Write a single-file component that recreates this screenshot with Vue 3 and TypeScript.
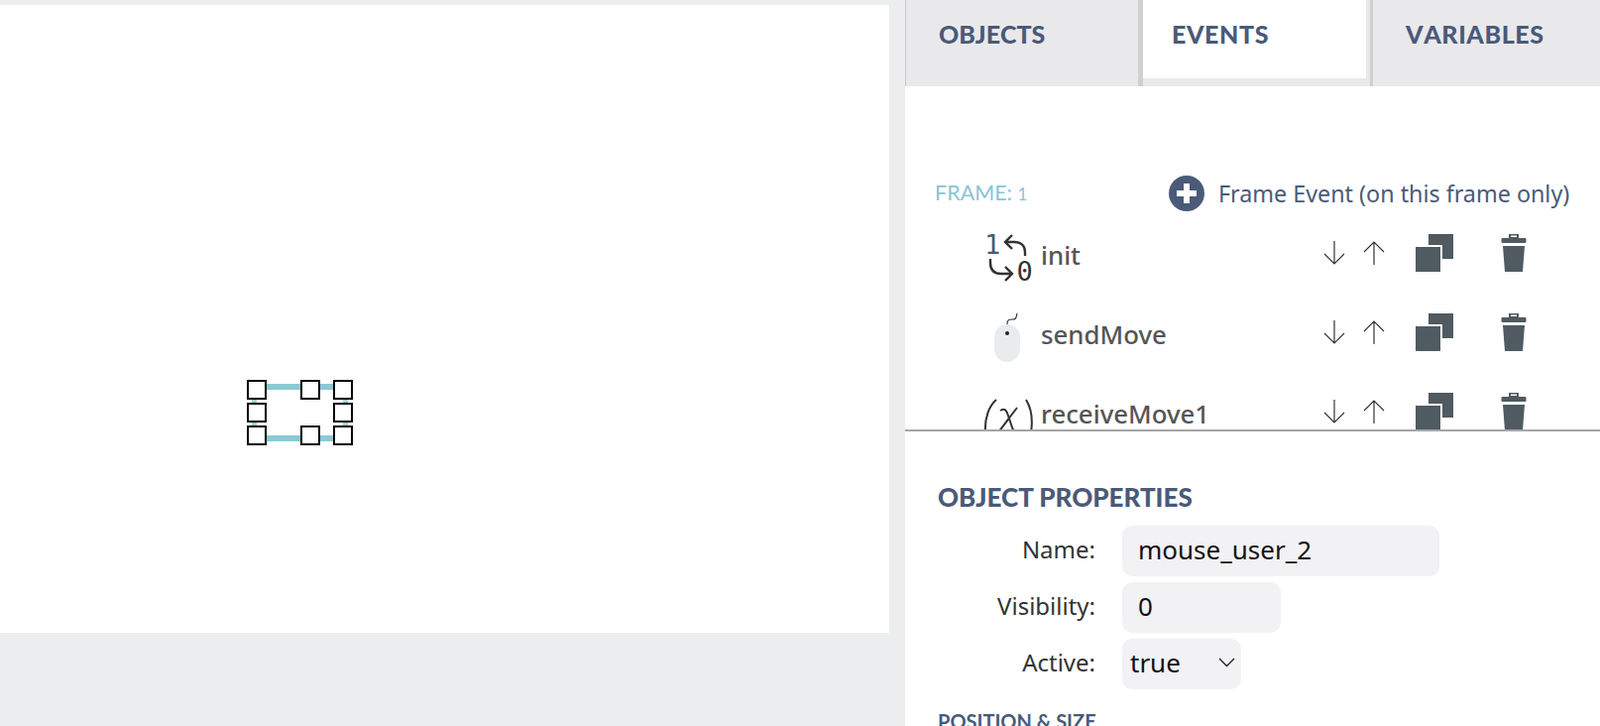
<script setup lang="ts">
interface EventRow { name: string; icon: 'loop' | 'mouse' | 'fn' }
const rows: EventRow[] = [
  { name: 'init', icon: 'loop' },
  { name: 'sendMove', icon: 'mouse' },
  { name: 'receiveMove1', icon: 'fn' },
]
const tabs = ['OBJECTS', 'EVENTS', 'VARIABLES']
const handles = [
  { x: 0, y: 0 }, { x: 54, y: 0 }, { x: 87, y: 0 },
  { x: 0, y: 23 }, { x: 87, y: 23 },
  { x: 0, y: 46 }, { x: 54, y: 46 }, { x: 87, y: 46 },
]
</script>

<template>
  <div class="page">
    <main class="stage">
      <div class="canvas">
        <div class="selection">
          <svg class="sel-lines" width="107" height="66" viewBox="0 0 107 66">
            <rect x="7" y="4" width="93" height="6" fill="#8bc9d4" />
            <rect x="7" y="56" width="93" height="6" fill="#8bc9d4" />
            <rect x="5" y="7" width="5" height="52" fill="#9fcfd3" />
            <rect x="97" y="7" width="5" height="52" fill="#9fcfd3" />
          </svg>
          <span
            v-for="(h, i) in handles"
            :key="i"
            class="handle"
            :style="{ left: h.x + 'px', top: h.y + 'px' }"
          />
        </div>
      </div>
    </main>

    <aside class="panel">
      <nav class="tabs">
        <div v-for="t in tabs" :key="t" class="tab" :class="['tab-' + t.toLowerCase(), { active: t === 'EVENTS' }]">
          <span>{{ t }}</span>
        </div>
      </nav>

      <section class="event-pane">
        <header class="frame-head">
          <div class="frame-label">FRAME: <small>1</small></div>
          <div class="add">
            <svg width="36" height="36" viewBox="0 0 36 36">
              <circle cx="18" cy="18" r="18" fill="#4a5a78" />
              <path d="M15 8h6v7h7v6h-7v7h-6v-7H8v-6h7z" fill="#fff" />
            </svg>
            <span>Frame Event (on this frame only)</span>
          </div>
        </header>

        <div class="list">
          <div v-for="r in rows" :key="r.name" class="row">
            <div class="row-icon">
              <svg v-if="r.icon === 'loop'" width="52" height="52" viewBox="0 0 52 52">
                <text x="1" y="24" class="loop-one">1</text>
                <text x="33.500" y="51" class="loop-zero">0</text>
                <path d="M22 12h9c7 0 11 4 11 10v4" fill="none" stroke="#333" stroke-width="2.400" />
                <path d="M29 5l-7 7 7 7" fill="none" stroke="#333" stroke-width="2.400" />
                <path d="M7 29v4c0 7 4 11 11 11h10" fill="none" stroke="#333" stroke-width="2.400" />
                <path d="M22 37l7 7-7 7" fill="none" stroke="#333" stroke-width="2.400" />
              </svg>
              <svg v-else-if="r.icon === 'mouse'" width="52" height="52" viewBox="0 0 52 52">
                <rect x="11" y="15" width="26" height="38" rx="13" fill="#e9ecee" />
                <circle cx="24" cy="24" r="2" fill="#222" />
                <path d="M24 15c0-5 2-5 5-5 3 0 4 0 5-6" fill="none" stroke="#333" stroke-width="1.200" />
              </svg>
              <svg v-else width="52" height="52" viewBox="0 0 52 52">
                <path d="M13 11C6 17 1 29 2 44" fill="none" stroke="#333" stroke-width="2" />
                <path d="M43 11c5 8 7 20 5 33" fill="none" stroke="#333" stroke-width="2" />
                <path d="M17 22c4-3 6-1 8 5l4 12c1 3 3 4 5 3M34 19L15 44" fill="none" stroke="#333" stroke-width="2" />
              </svg>
            </div>
            <span class="row-name">{{ r.name }}</span>
            <div class="row-actions">
              <svg class="arrow" width="24" height="26" viewBox="0 0 24 26">
                <path d="M12 1v23M2 14l10 10 10-10" fill="none" stroke="#333" stroke-width="1.200" />
              </svg>
              <svg class="arrow up" width="24" height="26" viewBox="0 0 24 26">
                <path d="M12 25V2M2 12L12 2l10 10" fill="none" stroke="#333" stroke-width="1.200" />
              </svg>
              <svg class="copy" width="38" height="38" viewBox="0 0 38 38">
                <path d="M13 0h25v25H27V11H13z" fill="#4f5b60" />
                <rect x="0" y="13" width="25" height="25" fill="#4f5b60" />
              </svg>
              <svg class="trash" width="26" height="38" viewBox="0 0 26 38">
                <path fill-rule="evenodd" d="M8 0h10v4H8zM10 1.500v1.500h6V1.500z" fill="#4f5b60" />
                <rect x="0.500" y="4" width="25" height="5" rx="1" fill="#4f5b60" />
                <path d="M2 12h22l-2 26H4z" fill="#4f5b60" />
              </svg>
            </div>
          </div>
        </div>
      </section>

      <section class="props">
        <h2>OBJECT PROPERTIES</h2>
        <div class="field">
          <label>Name:</label>
          <input class="inp wide" value="mouse_user_2" readonly />
        </div>
        <div class="field">
          <label>Visibility:</label>
          <input class="inp mid" value="0" readonly />
        </div>
        <div class="field">
          <label>Active:</label>
          <div class="select">
            <span>true</span>
            <svg width="17" height="10" viewBox="0 0 17 10">
              <path d="M1 1l7.500 7.500L16 1" fill="none" stroke="#222" stroke-width="1.400" />
            </svg>
          </div>
        </div>
        <h3>POSITION &amp; SIZE</h3>
      </section>
    </aside>
  </div>
</template>

<style>
html, body { margin: 0; background: #ecedef; }
</style>

<style scoped>
.page {
  display: flex;
  width: 1614px;
  height: 732px;
  overflow: hidden;
  background: #ecedef;
  font-family: "Noto Sans", sans-serif;
}
.stage { width: 913px; flex: none; padding-top: 5px; box-sizing: border-box; }
.canvas { position: relative; width: 897px; height: 633px; background: #fff; }
.selection { position: absolute; left: 249px; top: 378px; width: 107px; height: 66px; }
.sel-lines { position: absolute; left: 0; top: 0; }
.handle {
  position: absolute;
  width: 20px;
  height: 20px;
  box-sizing: border-box;
  border: 2px solid #000;
  background: #fff;
}
.panel { flex: 1; background: #fff; display: flex; flex-direction: column; min-width: 0; }
.tabs { display: flex; height: 87px; flex: none; background: #e9e9ec; }
.tab {
  box-sizing: border-box;
  height: 87px;
  border-left: 1px solid #c9c9cc;
  color: #4a5a78;
  font-family: Lato, sans-serif;
  font-weight: 900;
  font-size: 25px;
  line-height: 1;
  padding-top: 22px;
  font-kerning: none;
  white-space: nowrap;
}
.tab-objects { width: 235px; padding-left: 33px; }
.tab-events {
  width: 237px;
  padding-left: 29px;
  border-left: 5px solid #d0d0d3;
  border-right: 3px solid #d0d0d3;
  position: relative;
  letter-spacing: 0.600px;
}
.tab-events::before {
  content: "";
  position: absolute;
  left: 0;
  right: 4px;
  top: 0;
  height: 79px;
  background: #fff;
}
.tab-events span { position: relative; }
.tab-variables { flex: 1; padding-left: 33px; border-left: 0; letter-spacing: 0.600px; }
.event-pane { height: 348px; flex: none; box-sizing: border-box; padding-top: 90px; border-bottom: 2px solid #a6a6a6; overflow: hidden; }
.frame-head { display: flex; align-items: center; height: 36px; }
.frame-label {
  margin-left: 30px;
  width: 236px;
  color: #8cc3d3;
  font-family: Lato, sans-serif;
  font-size: 21.500px;
  line-height: 36px;
}
.frame-label small { font-size: 17px; }
.add { display: flex; align-items: center; gap: 14px; color: #4a5a78; font-size: 23.300px; line-height: 36px; white-space: nowrap; }
.list { padding-top: 5px; }
.row { display: flex; align-items: center; height: 80px; }
.row-icon { width: 52px; margin-left: 79px; height: 52px; flex: none; }
.row-icon svg { overflow: visible; }
.loop-one, .loop-zero { font-family: "DejaVu Sans Mono", monospace; font-size: 27px; }
.loop-one { fill: #4a5a78; }
.loop-zero { fill: #333; }
.row-name { margin-left: 6px; width: 180px; color: #555; font-size: 25.800px; font-weight: 500; line-height: 1; }
.row-actions { display: flex; align-items: center; margin: 0 0 6px 104px; }
.arrow.up { margin-left: 16px; }
.copy { margin-left: 30px; }
.trash { margin-left: 48px; }
.props { padding: 54px 0 0 33px; }
.props h2 {
  margin: 0 0 17px;
  color: #4a5a78;
  font-family: Lato, sans-serif;
  font-weight: 900;
  font-size: 26px;
  line-height: 24px;
}
.field { display: flex; align-items: center; height: 51px; margin-bottom: 6px; }
.field label { width: 159px; padding-bottom: 4px; text-align: right; color: #333; font-size: 24px; }
.inp, .select {
  margin-left: 27px;
  height: 51px;
  box-sizing: border-box;
  background: #f2f2f4;
  border: 0;
  border-radius: 10px;
  font-family: "Noto Sans", sans-serif;
  font-size: 26px;
  color: #111;
  outline: none;
}
.inp { padding: 0 16px 4px; }
.inp.wide { width: 320px; }
.inp.mid { width: 160px; }
.select { width: 120px; display: flex; align-items: center; justify-content: space-between; padding: 0 6px 3px 8px; }
.props h3 {
  margin: 20px 0 0;
  color: #4a5a78;
  font-family: Lato, sans-serif;
  font-weight: 700;
  font-size: 20px;
  line-height: 24px;
}
</style>
